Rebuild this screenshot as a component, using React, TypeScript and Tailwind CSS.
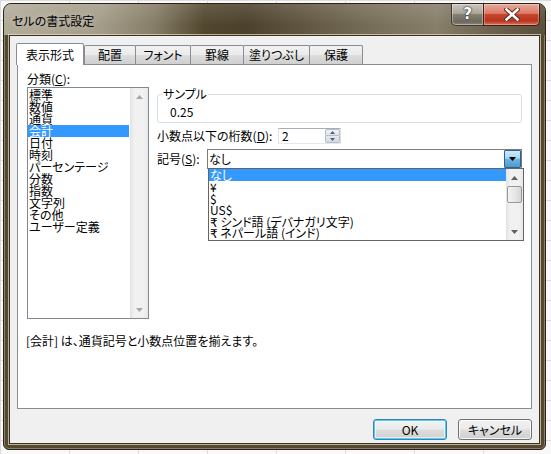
import React from 'react';

const font = "font-['Noto_Sans_CJK_JP','DejaVu_Sans',sans-serif] [font-feature-settings:'palt']";

const categories = ['標準', '数値', '通貨', '会計', '日付', '時刻', 'パーセンテージ', '分数', '指数', '文字列', 'その他', 'ユーザー定義'];
const symbols = ['なし', '¥', '$', 'US$', '₹ シンド語 (デバナガリ文字)', '₹ ネパール語 (インド)'];

// tab label + pixel width (borders included)
const tabs: [string, string][] = [
  ['配置', 'w-[52px]'],
  ['フォント', 'w-[56px]'],
  ['罫線', 'w-[54px]'],
  ['塗りつぶし', 'w-[67px]'],
  ['保護', 'w-[54px]'],
];

function Tri({ up = false, color = '#000' }: { up?: boolean; color?: string }) {
  return (
    <svg width="7" height="4" viewBox="0 0 7 4" className="block">
      <path d={up ? 'M0 4 L3.5 0 L7 4 Z' : 'M0 0 L7 0 L3.5 4 Z'} fill={color} />
    </svg>
  );
}

function Key({ k }: { k: string }) {
  return <span className="underline underline-offset-[1px]">{k}</span>;
}

function TitleBar() {
  return (
    <div className="h-[31px] flex items-start shrink-0 bg-[linear-gradient(180deg,rgba(255,255,255,0.12),rgba(255,255,255,0)_70%),linear-gradient(90deg,#b1ab99_0%,#a39c88_18%,#857c66_28%,#51472f_37%,#4b412c_45%,#5f5540_55%,#776e59_68%,#877e6a_80%,#6c634e_90%,#5a503b_100%)]">
      <span className="ml-[8px] mt-[10px] text-[12px] leading-[13px] text-black font-['Noto_Sans_CJK_JP',sans-serif] [text-shadow:0_0_6px_rgba(255,255,255,0.55)]">
        セルの書式設定
      </span>
      <div className="ml-auto mr-[5px] flex">
        <div className="w-[33px] h-[22px] flex items-center justify-center rounded-bl-[5px] border border-t-0 border-[#3f3b33] bg-[linear-gradient(180deg,#c9c6be_0%,#a9a59a_45%,#858074_50%,#6e695c_85%,#8c887b_100%)] shadow-[inset_0_0_0_1px_rgba(255,255,255,0.35)]">
          <span className="text-[15px] leading-[15px] font-bold text-white font-['DejaVu_Sans',sans-serif] [text-shadow:0_0_1px_#333,0_0_1px_#333,0_0_2px_#444]">?</span>
        </div>
        <div className="w-[57px] h-[22px] -ml-px flex items-center justify-center rounded-br-[5px] border border-t-0 border-[#4a1a10] bg-[linear-gradient(180deg,#e9ab9d_0%,#da7b65_45%,#c8462c_50%,#b8341e_80%,#d8755b_100%)] shadow-[inset_0_0_0_1px_rgba(255,255,255,0.3)]">
          <svg width="16" height="13" viewBox="0 0 16 13">
            <path d="M2.5 1.5 L13.5 11.5 M13.5 1.5 L2.5 11.5" stroke="#5a2418" strokeWidth="4.4" strokeLinecap="square" />
            <path d="M2.5 1.5 L13.5 11.5 M13.5 1.5 L2.5 11.5" stroke="#ffffff" strokeWidth="2.6" strokeLinecap="square" />
          </svg>
        </div>
      </div>
    </div>
  );
}

function ListScroll() {
  return (
    <div className="w-[18px] flex flex-col justify-between bg-[linear-gradient(90deg,#e3e3e3,#f1f1f1_25%,#f1f1f1_75%,#e8e8e8)]">
      <div className="h-[17px] flex items-center justify-center">
        <Tri up color="#a8a8a8" />
      </div>
      <div className="h-[17px] flex items-center justify-center">
        <Tri color="#a8a8a8" />
      </div>
    </div>
  );
}

function DropList() {
  return (
    <div className="absolute left-0 top-full w-[316px] h-[73px] z-20 flex bg-white border border-[#646464]">
      <div className="flex-1 flex flex-col">
        {symbols.map((s, i) => (
          <div
            key={s}
            className={`h-[11.5px] pl-[1px] leading-[12px] whitespace-nowrap ${i === 0 ? 'bg-[#3399ff] text-white h-[12px]' : ''}`}
          >
            {s}
          </div>
        ))}
      </div>
      <div className="w-[17px] flex flex-col bg-[linear-gradient(90deg,#e3e3e3,#f1f1f1_25%,#f1f1f1_75%,#e8e8e8)]">
        <div className="h-[17px] flex items-center justify-center">
          <Tri up color="#606060" />
        </div>
        <div className="h-[17px] mx-[1px] rounded-[2px] border border-[#979797] bg-[linear-gradient(90deg,#f3f3f3,#e8e8e8_50%,#d6d6d6)]" />
        <div className="flex-1" />
        <div className="h-[17px] flex items-center justify-center">
          <Tri color="#606060" />
        </div>
      </div>
    </div>
  );
}

function Panel() {
  return (
    <div className="h-[345px] bg-white border border-[#898c95] flex flex-col pl-[9px]">
      <div className="flex">
        {/* category column */}
        <div className="mt-[8px] flex flex-col">
          <div className="h-[12px] leading-[12px]">
            分類(<Key k="C" />):
          </div>
          <div className="mt-[2px] w-[122px] h-[232px] border border-[#828790] flex">
            <div className="w-[102px] pt-[1px] pr-[1px] flex flex-col">
              {categories.map((c, i) => (
                <div key={c} className={`h-[12px] leading-[12px] pl-[1px] ${i === 3 ? 'bg-[#3399ff] text-white' : ''}`}>
                  {c}
                </div>
              ))}
            </div>
            <ListScroll />
          </div>
        </div>

        {/* format options */}
        <div className="ml-[8px] mt-[23px] w-[365px] flex flex-col">
          <fieldset className="border border-[#d5dfe5] rounded-[3px] pl-[4px] pb-[4px]">
            <legend className="px-[1px] leading-[12px]">サンプル</legend>
            <div className="pl-[8px] mt-[6px] leading-[12px]">0.25</div>
          </fieldset>

          <div className="mt-[5px] h-[16px] flex items-center">
            <span className="w-[121px] leading-[12px]">
              小数点以下の桁数(<Key k="D" />):
            </span>
            <div className="w-[63px] h-[16px] flex items-center border border-[#abadb3] border-b-[#e3e9ef] border-r-[#dbdfe6] border-l-[#e2e3ea]">
              <span className="pl-[3px] flex-1 leading-[12px]">2</span>
              <div className="w-[15px] h-[14px] flex flex-col">
                <div className="h-[7px] flex items-center justify-center border border-[#b4bfca] rounded-t-[2px] bg-[linear-gradient(180deg,#f3f5f8,#dde3ea)]">
                  <svg width="5" height="3" viewBox="0 0 5 3"><path d="M0 3 L2.5 0 L5 3 Z" fill="#4e6079" /></svg>
                </div>
                <div className="h-[7px] flex items-center justify-center border border-t-0 border-[#b4bfca] rounded-b-[2px] bg-[linear-gradient(180deg,#e6eaef,#d2d9e2)]">
                  <svg width="5" height="3" viewBox="0 0 5 3"><path d="M0 0 L5 0 L2.5 3 Z" fill="#4e6079" /></svg>
                </div>
              </div>
            </div>
          </div>

          <div className="mt-[5px] h-[20px] flex items-center">
            <span className="w-[50px] leading-[12px]">
              記号(<Key k="S" />):
            </span>
            <div className="relative w-[315px] h-[20px] flex items-center border border-[#7b7b7b] bg-white">
              <span className="pl-[1px] flex-1 leading-[12px]">なし</span>
              <div className="w-[17px] h-[18px] flex items-center justify-center border border-[#2c628b] rounded-[1px] bg-[linear-gradient(180deg,#cbe8f8_0%,#a8d7f2_45%,#6db4e0_50%,#4b9bcf_100%)]">
                <Tri />
              </div>
              <DropList />
            </div>
          </div>
        </div>
      </div>

      <div className="mt-[16px] leading-[12px] -ml-px">[会計] は、通貨記号と小数点位置を揃えます。</div>
    </div>
  );
}

function Btn({ label, primary = false }: { label: string; primary?: boolean }) {
  return (
    <div
      className={`w-[74px] h-[21px] flex items-center justify-center rounded-[3px] border leading-[12px] bg-[linear-gradient(180deg,#f2f2f2_0%,#ebebeb_48%,#dddddd_52%,#cfcfcf_100%)] ${
        primary
          ? 'border-[#3c7fb1] shadow-[inset_0_0_0_1px_#48d0f7,inset_0_0_0_2px_rgba(255,255,255,0.6)]'
          : 'border-[#707070] shadow-[inset_0_0_0_1px_rgba(255,255,255,0.8)]'
      }`}
    >
      {label}
    </div>
  );
}

export default function App() {
  return (
    <div className="w-[551px] h-[454px] overflow-hidden pl-[3px] pt-[3px] bg-[#f8f8f8] bg-[linear-gradient(#dcdcdc_1px,transparent_1px),linear-gradient(90deg,#dcdcdc_1px,transparent_1px)] bg-[length:69px_20px]">
      <div className={`w-[543px] h-[447px] flex flex-col rounded-t-[8px] rounded-b-[6px] overflow-hidden border border-[#2c2517] bg-[#54492f] shadow-[inset_0_0_0_1px_rgba(255,255,255,0.3)] ${font} text-[12px] text-black`}>
        <TitleBar />
        <div className="flex-1 mx-[5px] mb-[5px] flex flex-col bg-[#f0f0f0] border border-[#3a3122] shadow-[0_0_0_1px_rgba(230,222,200,0.7)] pl-[7px] pr-[7px]">
          <div className="mt-[7px] h-[21px] flex items-end">
            <div className="relative z-10 -ml-px -mb-px w-[68px] h-[22px] flex items-center justify-center bg-white border border-b-0 border-[#898c95] rounded-t-[2px] leading-[12px]">
              表示形式
            </div>
            {tabs.map(([t, w], i) => (
              <div
                key={t}
                className={`${w} ${i > 0 ? '-ml-px' : ''} h-[19px] flex items-center justify-center border border-b-0 border-[#898c95] rounded-t-[2px] leading-[12px] bg-[linear-gradient(180deg,#f2f2f2_0%,#ebebeb_48%,#dddddd_52%,#cfcfcf_100%)]`}
              >
                {t}
              </div>
            ))}
          </div>
          <Panel />
          <div className="mt-[10px] flex justify-end gap-[11px]">
            <Btn label="OK" primary />
            <Btn label="キャンセル" />
          </div>
        </div>
      </div>
    </div>
  );
}
